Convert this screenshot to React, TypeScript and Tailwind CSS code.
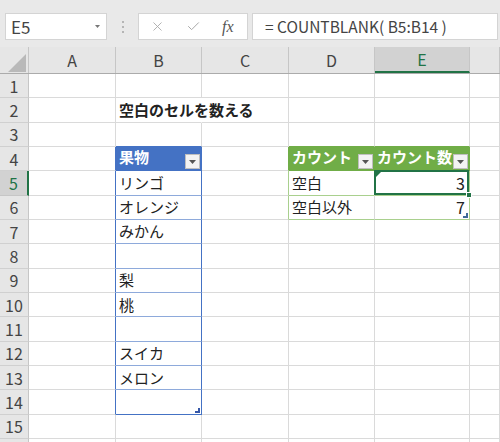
import { Check, X } from "lucide-react";

const COLS = ["A", "B", "C", "D", "E", "F"];
const WIDTHS = ["w-[87px]", "w-[86px]", "w-[87px]", "w-[86px]", "w-[95px]", "flex-1"];

const FRUITS: Record<number, string> = {
  5: "リンゴ",
  6: "オレンジ",
  7: "みかん",
  9: "梨",
  10: "桃",
  12: "スイカ",
  13: "メロン",
};

function FilterButton() {
  return (
    <span className="w-[15px] h-[15px] bg-[#f3f3f3] border border-[#bfbfbf] flex items-center justify-center shrink-0 mb-[1px] mr-[1px]">
      <svg width="7" height="4" viewBox="0 0 7 4">
        <path d="M0 0 H7 L3.5 4 Z" fill="#555" />
      </svg>
    </span>
  );
}

function ResizeHandle({ color }: { color: string }) {
  return (
    <svg width="5" height="5" viewBox="0 0 5 5" className="absolute right-[1px] bottom-[1px]">
      <path d="M5 0 V5 H0 V3 H3 V0 Z" fill={color} />
    </svg>
  );
}

// border colours per cell: gridline unless a table edge runs there
function borders(r: number, c: string) {
  let right = "border-r-[#dadada]";
  let bottom = "border-b-[#dadada]";

  if (c === "A" && r >= 4 && r <= 14) right = "border-r-[#4472c4]";
  if (c === "B") {
    if (r === 2) right = "border-r-transparent";
    if (r === 3) bottom = "border-b-[#4472c4]";
    if (r >= 4 && r <= 14) {
      right = "border-r-[#4472c4]";
      bottom = r === 4 || r === 14 ? "border-b-[#4472c4]" : "border-b-[#8eaadb]";
    }
  }
  if (c === "C") {
    if (r === 4) right = "border-r-[#70ad47]";
    if (r === 5 || r === 6) right = "border-r-[#a9d08e]";
  }
  if (c === "D" || c === "E") {
    if (r === 3 || r === 4) bottom = "border-b-[#70ad47]";
    if (r === 5 || r === 6) bottom = "border-b-[#a9d08e]";
    if (r === 4) right = "border-r-[#70ad47]";
    if (c === "E" && (r === 5 || r === 6)) right = "border-r-[#a9d08e]";
  }
  return `${right} ${bottom}`;
}

function CellContent({ r, c }: { r: number; c: string }) {
  if (c === "B" && r === 2) {
    return (
      <span className="pl-[3px] font-bold whitespace-nowrap relative z-10">空白のセルを数える</span>
    );
  }
  if (r === 4 && c === "B") {
    return (
      <div className="flex-1 h-full flex items-end justify-between bg-[#4472c4] text-white font-bold">
        <span className="pl-[3px] pb-[2px]">果物</span>
        <FilterButton />
      </div>
    );
  }
  if (r === 4 && c === "D") {
    return (
      <div className="flex-1 h-full flex items-end justify-between bg-[#70ad47] text-white font-bold">
        <span className="pl-[3px] pb-[2px]">カウント</span>
        <FilterButton />
      </div>
    );
  }
  if (r === 4 && c === "E") {
    return (
      <div className="flex-1 h-full flex items-end justify-between bg-[#70ad47] text-white font-bold">
        <span className="pl-[2px] pb-[2px] whitespace-nowrap">カウント数</span>
        <FilterButton />
      </div>
    );
  }
  if (c === "B" && FRUITS[r]) {
    return <span className="pl-[3px]">{FRUITS[r]}</span>;
  }
  if (c === "B" && r === 14) {
    return <ResizeHandle color="#3657a8" />;
  }
  if (c === "D" && r === 5) return <span className="pl-[3px]">空白</span>;
  if (c === "D" && r === 6) return <span className="pl-[3px]">空白以外</span>;
  if (c === "E" && r === 5) {
    return (
      <>
        <span className="ml-auto pr-[4px] text-[16px]">3</span>
        {/* selected cell */}
        <div className="absolute -left-[1px] -top-[1px] right-0 bottom-0 border-2 border-[#217346] pointer-events-none" />
        <div className="absolute -right-[3px] -bottom-[3px] w-[6px] h-[6px] bg-[#217346] border border-white z-10" />
        <svg width="5" height="5" viewBox="0 0 5 5" className="absolute left-[1px] top-[1px]">
          <path d="M0 0 H5 L0 5 Z" fill="#217346" />
        </svg>
      </>
    );
  }
  if (c === "E" && r === 6) {
    return (
      <>
        <span className="ml-auto pr-[4px] text-[16px]">7</span>
        <ResizeHandle color="#3f6a9a" />
      </>
    );
  }
  return null;
}

export default function App() {
  const rows = Array.from({ length: 16 }, (_, i) => i + 1);

  return (
    <div className="w-[500px] h-[442px] overflow-hidden bg-white text-[#222] font-['Noto_Sans_CJK_JP','Noto_Sans',sans-serif]">
      {/* Formula bar */}
      <div className="h-[47px] bg-[#e9e9e9] flex items-start pt-[13px]">
        <div className="ml-[5px] w-[102px] h-[27px] bg-white border border-[#d4d4d4] flex items-center justify-between pl-[5px] pr-[6px]">
          <span className="text-[17px] text-[#444] leading-none">E5</span>
          <svg width="5" height="3" viewBox="0 0 5 3">
            <path d="M0 0 H5 L2.5 3 Z" fill="#777" />
          </svg>
        </div>
        <div className="w-[31px] h-[27px] flex flex-col items-center justify-center gap-[3px]">
          <span className="w-[2px] h-[2px] bg-[#b5b5b5]" />
          <span className="w-[2px] h-[2px] bg-[#b5b5b5]" />
          <span className="w-[2px] h-[2px] bg-[#b5b5b5]" />
        </div>
        <div className="w-[110px] h-[27px] bg-white border border-[#d4d4d4] flex items-center">
          <X size={15} strokeWidth={1.4} className="text-[#a8a8a8] ml-[11px]" />
          <Check size={15} strokeWidth={1.6} className="text-[#a8a8a8] ml-[21px]" />
          <span className="ml-[21px] font-['Liberation_Serif',serif] italic text-[16px] text-[#555] leading-none">
            fx
          </span>
        </div>
        <div className="ml-[4px] mr-[2px] flex-1 h-[27px] bg-white border border-[#d4d4d4] flex items-center pl-[12px]">
          <span className="text-[15.5px] text-[#444] leading-none whitespace-nowrap">= COUNTBLANK( B5:B14 )</span>
        </div>
      </div>

      {/* Column headers */}
      <div className="flex h-[27px] bg-[#e6e6e6] border-b border-b-[#ababab] text-[16px] text-[#444]">
        <div className="w-[29px] shrink-0 border-r border-r-[#c6c6c6] flex items-end justify-end pr-[2px] pb-[1px]">
          <svg width="18" height="18" viewBox="0 0 18 18">
            <path d="M18 0 V18 H0 Z" fill="#b9b9b9" />
          </svg>
        </div>
        {COLS.map((c, i) =>
          c === "E" ? (
            <div
              key={c}
              className={`${WIDTHS[i]} shrink-0 bg-[#d2d2d2] border-r border-r-[#c6c6c6] border-b-2 border-b-[#217346] flex items-center justify-center text-[#217346]`}
            >
              {c}
            </div>
          ) : (
            <div
              key={c}
              className={`${WIDTHS[i]} shrink-0 border-r border-r-[#c6c6c6] flex items-center justify-center`}
            >
              {c === "F" ? "" : c}
            </div>
          )
        )}
      </div>

      {/* Grid */}
      {rows.map((r) => (
        <div key={r} className="flex h-[24.35px] text-[15px]">
          <div
            className={
              r === 5
                ? "w-[29px] shrink-0 bg-[#d2d2d2] border-r-2 border-r-[#217346] border-b border-b-[#c6c6c6] flex items-center justify-center text-[16px] text-[#217346]"
                : "w-[29px] shrink-0 bg-[#e6e6e6] border-r border-r-[#c6c6c6] border-b border-b-[#d0d0d0] flex items-center justify-center text-[16px] text-[#444]"
            }
          >
            {r <= 15 ? r : ""}
          </div>
          {COLS.map((c, i) => (
            <div
              key={c}
              className={`${WIDTHS[i]} shrink-0 relative flex items-center border-r border-b ${borders(r, c)}`}
            >
              <CellContent r={r} c={c} />
            </div>
          ))}
        </div>
      ))}
    </div>
  );
}
